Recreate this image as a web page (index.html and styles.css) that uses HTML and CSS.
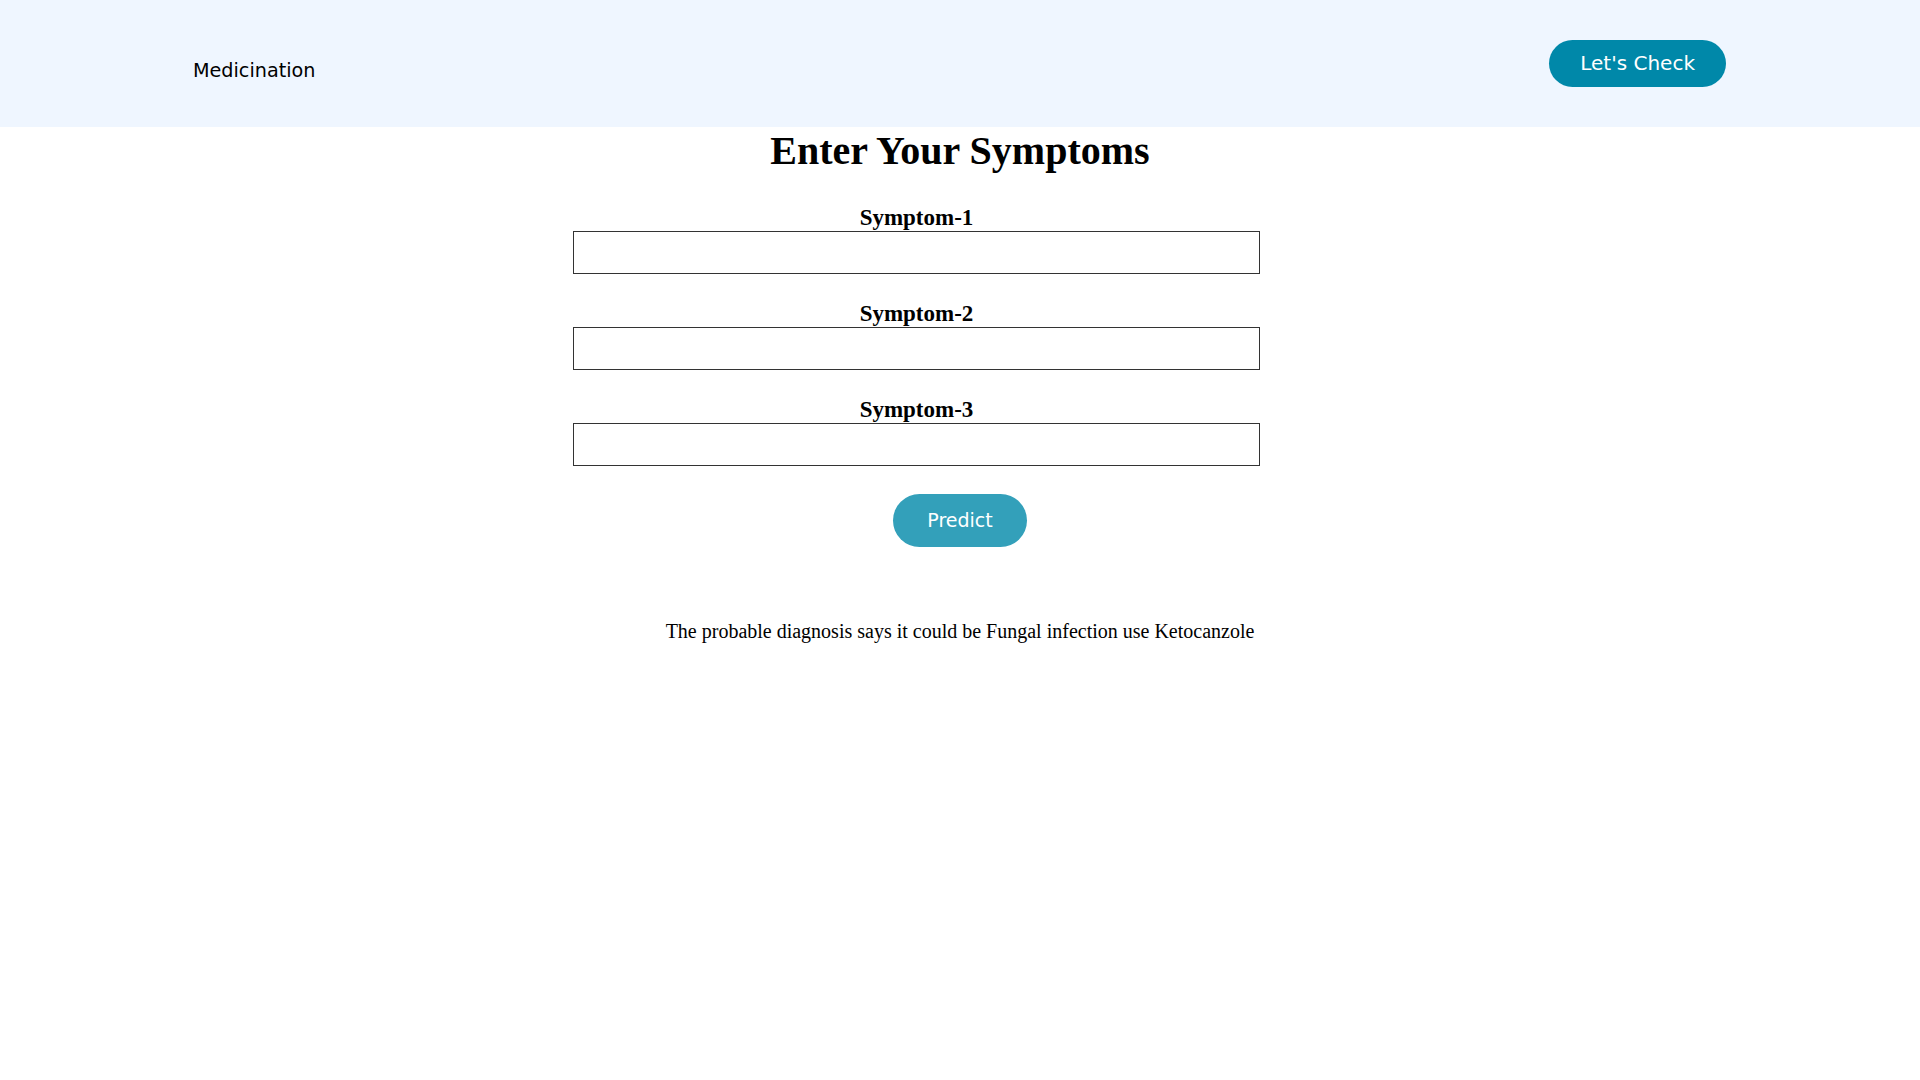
FILE: index.html
```html
<!DOCTYPE html>
<html lang="en">
<head>
<meta charset="utf-8">
<title>Medicination</title>
<link rel="stylesheet" href="styles.css">
</head>
<body>
<header class="topbar">
  <div class="brand">Medicination</div>
  <button class="btn btn-check" type="button">Let's Check</button>
</header>
<main class="page">
  <h1 class="title">Enter Your Symptoms</h1>
  <form class="symptom-form">
    <div class="fields">
      <div class="field">
        <label class="field-label" for="s1">Symptom-1</label>
        <input class="field-input" id="s1" type="text">
      </div>
      <div class="field">
        <label class="field-label" for="s2">Symptom-2</label>
        <input class="field-input" id="s2" type="text">
      </div>
      <div class="field">
        <label class="field-label" for="s3">Symptom-3</label>
        <input class="field-input" id="s3" type="text">
      </div>
    </div>
    <div class="actions">
      <button class="btn btn-predict" type="button">Predict</button>
    </div>
  </form>
  <p class="result">The probable diagnosis says it could be Fungal infection use Ketocanzole</p>
</main>
</body>
</html>
```
FILE: styles.css
```css
* { box-sizing: border-box; }

body {
  margin: 0;
  background: #ffffff;
  font-family: "Liberation Serif", "Times New Roman", serif;
  color: #000;
}

.topbar {
  height: 127px;
  background: #eff6ff;
  display: flex;
  align-items: center;
  justify-content: space-between;
  padding: 0 194px 0 193px;
}

.brand {
  font-family: "DejaVu Sans", Verdana, sans-serif;
  font-size: 19.2px;
  color: #000;
  margin-top: 14px;
}

.btn {
  font-family: "DejaVu Sans", Verdana, sans-serif;
  color: #fff;
  border: none;
  cursor: pointer;
}

.btn-check {
  background: #0088a9;
  font-size: 20px;
  line-height: 23px;
  padding: 12px 31px;
  border-radius: 24px;
}

.page {
  padding-top: 1px;
}

.title {
  margin: 0;
  text-align: center;
  font-size: 40px;
  line-height: 45px;
  font-weight: bold;
}

.symptom-form {
  margin-top: 31px;
}

.fields {
  width: 687px;
  margin-left: calc(50% - 387px);
  display: flex;
  flex-direction: column;
  gap: 26px;
}

.field {
  display: flex;
  flex-direction: column;
}

.field-label {
  text-align: center;
  font-size: 23px;
  line-height: 27px;
  font-weight: bold;
}

.field-input {
  height: 43px;
  width: 100%;
  border: 1px solid #333;
  border-radius: 0;
  padding: 4px 8px;
  font-size: 16px;
  background: #fff;
}

.actions {
  display: flex;
  justify-content: center;
  margin-top: 28px;
}

.btn-predict {
  background: #33a0ba;
  font-size: 19px;
  line-height: 21px;
  padding: 16px 0;
  border-radius: 27px;
  width: 134px;
  height: 53px;
}

.result {
  margin: 73px 0 0;
  text-align: center;
  font-size: 20px;
  line-height: 23px;
}
```
